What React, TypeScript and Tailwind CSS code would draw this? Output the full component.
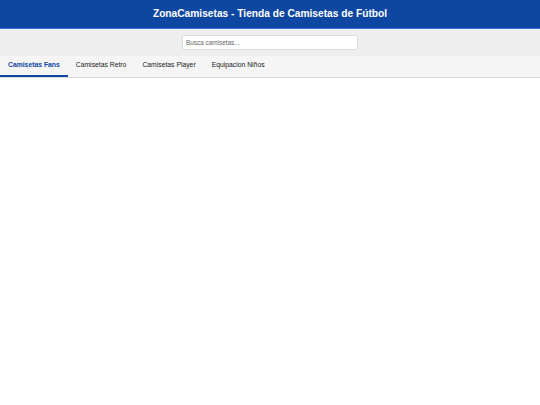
import React from "react";

export default function App() {
  const tabs = ["Camisetas Fans", "Camisetas Retro", "Camisetas Player", "Equipacion Niños"];
  return (
    <div className="w-[540px] h-[405px] bg-white" style={{ fontFamily: '"Liberation Sans", Arial, sans-serif' }}>
      <header className="h-[29px] bg-[#0d47a1] border-b border-[#3b74d4] flex items-center justify-center">
        <h1 className="text-white font-bold text-[10.2px] leading-none">ZonaCamisetas - Tienda de Camisetas de Fútbol</h1>
      </header>
      <div className="h-[27px] bg-[#eeeeee] flex items-center justify-center">
        <input
          className="w-[176px] h-[15px] bg-white border border-[#dddddd] rounded-[2px] px-[3px] text-[6.4px] text-[#333] placeholder:text-[#666] outline-none"
          placeholder="Busca camisetas..."
        />
      </div>
      <nav className="h-[22px] bg-[#f5f5f5] border-b border-[#dddddd] flex">
        {tabs.map((t, i) => (
          <div
            key={t}
            className={
              i === 0
                ? "px-[8px] flex items-center text-[6.8px] font-bold text-[#0d47a1] border-b-2 border-[#0d47a1]"
                : "px-[8px] flex items-center text-[6.8px] text-[#222] border-b-2 border-transparent"
            }
          >
            {t}
          </div>
        ))}
      </nav>
    </div>
  );
}
